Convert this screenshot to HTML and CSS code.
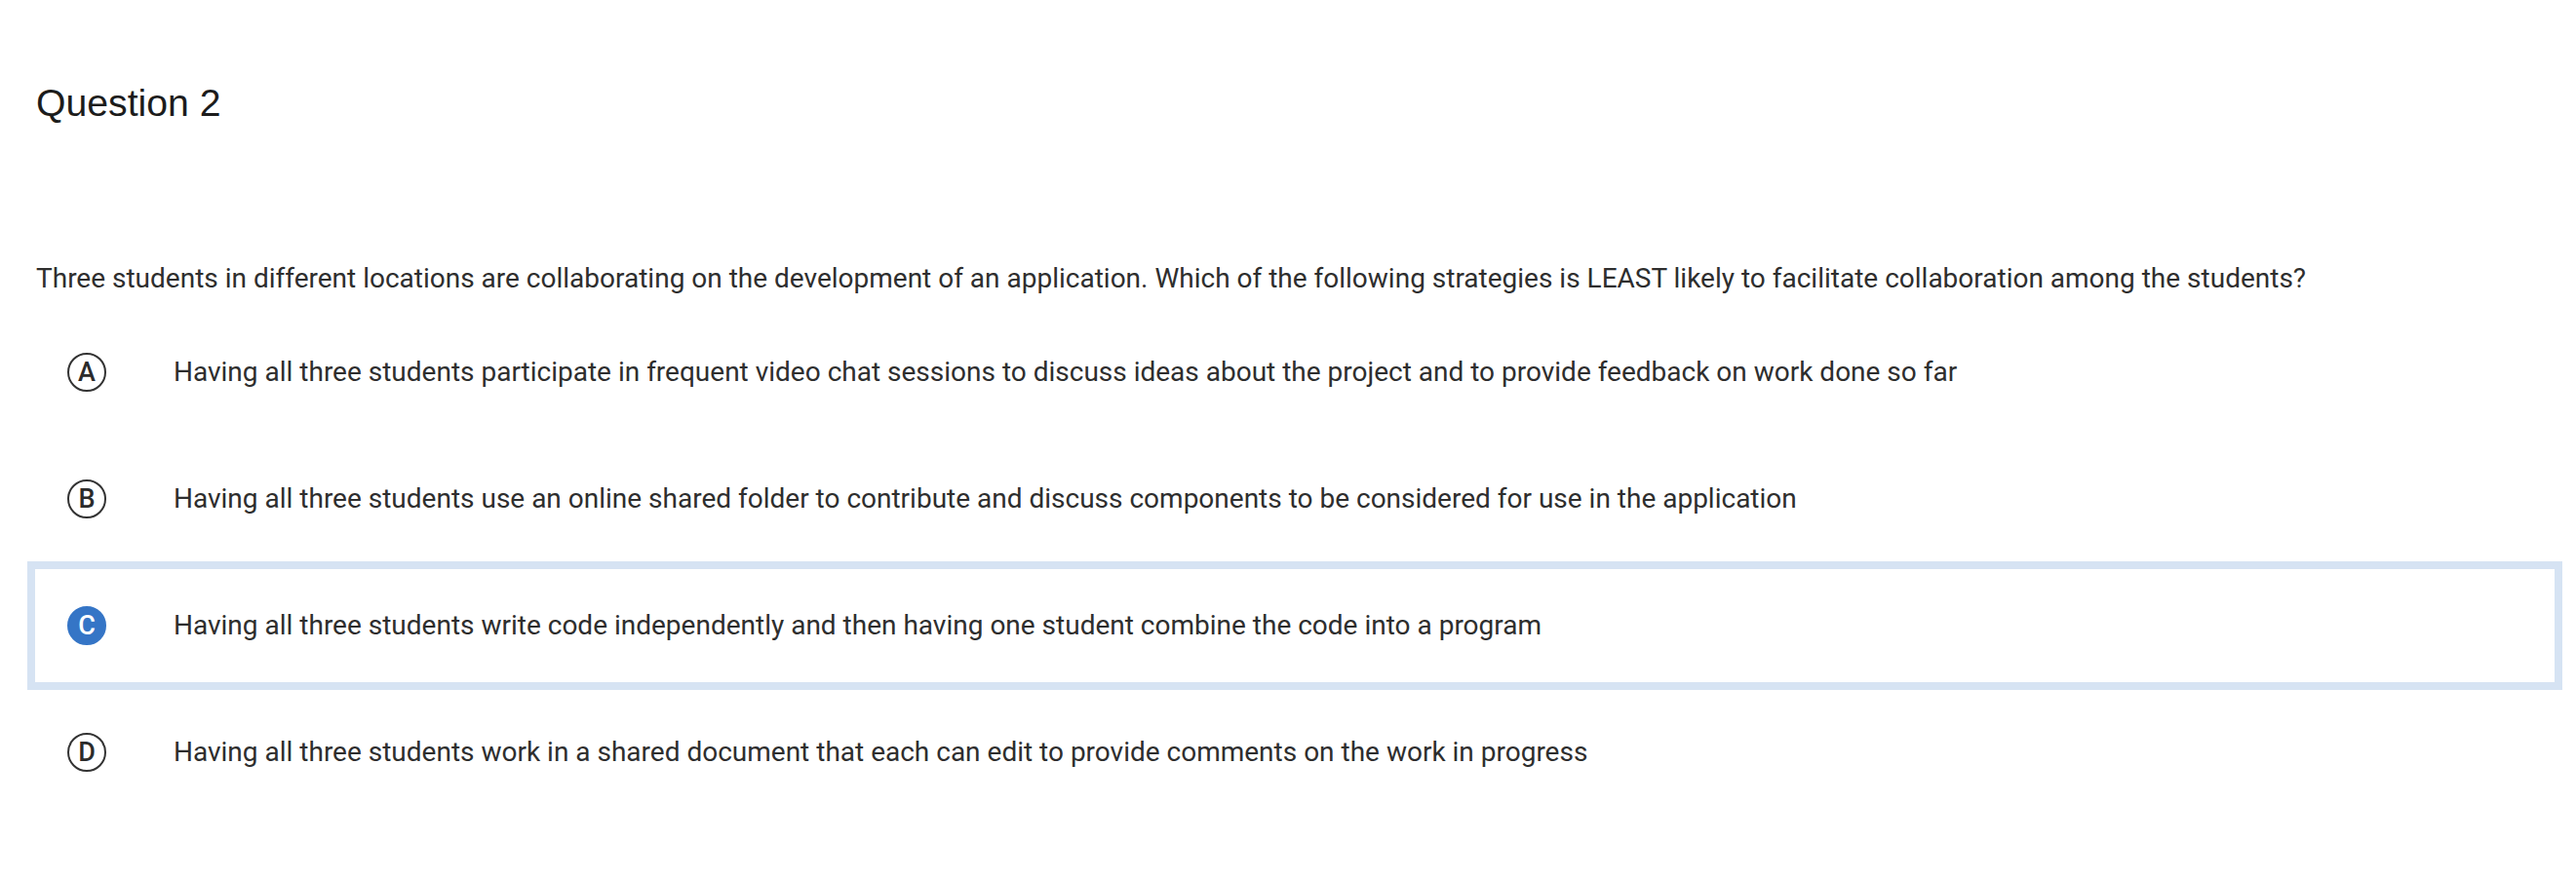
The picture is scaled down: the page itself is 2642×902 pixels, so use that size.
FILE: index.html
```html
<!DOCTYPE html>
<html lang="en">
<head>
<meta charset="utf-8">
<title>Question 2</title>
<link rel="stylesheet" href="styles.css">
</head>
<body>
<main class="page">
  <h1 class="q-title">Question 2</h1>
  <p class="q-stem">Three students in different locations are collaborating on the development of an application. Which of the following strategies is LEAST likely to facilitate collaboration among the students?</p>
  <ul class="options">
    <li class="option">
      <span class="letter">A</span>
      <span class="option-text">Having all three students participate in frequent video chat sessions to discuss ideas about the project and to provide feedback on work done so far</span>
    </li>
    <li class="option">
      <span class="letter">B</span>
      <span class="option-text">Having all three students use an online shared folder to contribute and discuss components to be considered for use in the application</span>
    </li>
    <li class="option selected">
      <span class="letter">C</span>
      <span class="option-text">Having all three students write code independently and then having one student combine the code into a program</span>
    </li>
    <li class="option">
      <span class="letter">D</span>
      <span class="option-text">Having all three students work in a shared document that each can edit to provide comments on the work in progress</span>
    </li>
  </ul>
</main>
</body>
</html>
```

FILE: styles.css
```css
html, body {
  margin: 0;
  padding: 0;
  background: #ffffff;
}

.page {
  padding: 84px 15px 0 29px;
}

.q-title {
  margin: 0 0 0 8px;
  font-family: "Liberation Sans", Arial, sans-serif;
  font-weight: 400;
  font-size: 39.2px;
  line-height: 44px;
  color: #1c1c1c;
}

.q-stem {
  margin: 138px 0 0 8px;
  font-family: Roboto, "Noto Sans", sans-serif;
  font-size: 28px;
  line-height: 40px;
  color: #2e2e2e;
}

.options {
  list-style: none;
  margin: 11px 0 0 0;
  padding: 0;
}

.option {
  display: flex;
  align-items: center;
  height: 130px;
  padding-left: 40px;
  box-sizing: border-box;
}

.option.selected {
  outline: 8px solid #d6e3f3;
  outline-offset: -7px;
}

.letter {
  flex: none;
  width: 40px;
  height: 40px;
  box-sizing: border-box;
  border: 2px solid #333333;
  border-radius: 50%;
  display: flex;
  align-items: center;
  justify-content: center;
  font-family: Roboto, "Noto Sans", sans-serif;
  font-weight: 500;
  font-size: 27px;
  line-height: 1;
  color: #2b2b2b;
}

.selected .letter {
  background: #3575c6;
  border-color: #3575c6;
  color: #ffffff;
}

.option-text {
  margin-left: 69px;
  font-family: Roboto, "Noto Sans", sans-serif;
  font-size: 28px;
  line-height: 40px;
  color: #2e2e2e;
}
```
